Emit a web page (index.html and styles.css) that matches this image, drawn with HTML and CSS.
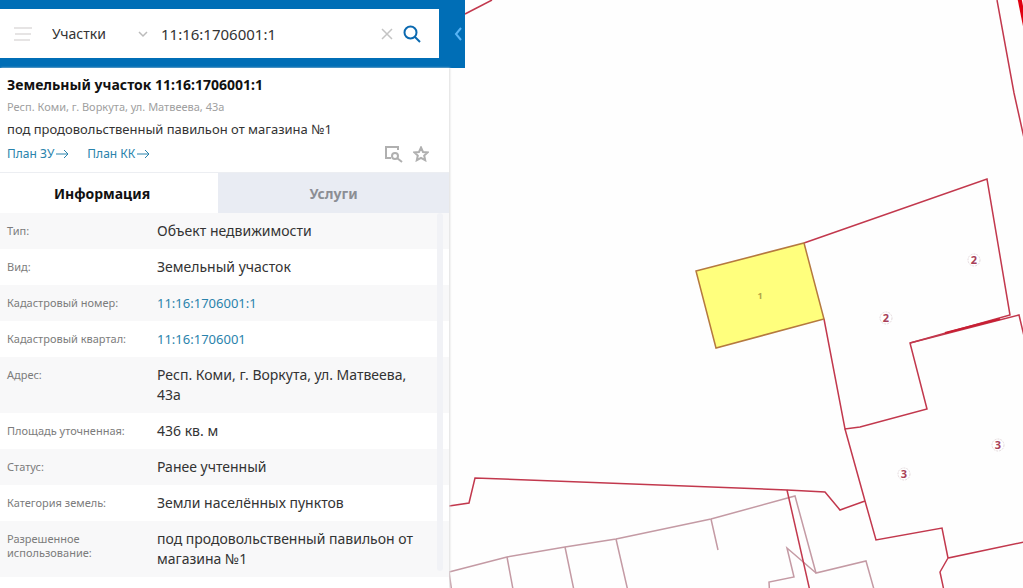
FILE: index.html
```html
<!DOCTYPE html>
<html lang="ru">
<head>
<meta charset="utf-8">
<meta name="viewport" content="width=device-width, initial-scale=1">
<title>Земельный участок 11:16:1706001:1</title>
<link rel="stylesheet" href="styles.css">
</head>
<body>
<div class="app">
  <svg class="map" viewBox="0 0 1023 588" preserveAspectRatio="xMidYMid slice" role="img" aria-label="Карта участков">
    <g class="building" stroke-width="1.5">
      <path d="M449 572 507 557 565 547 616 539 711 519 795 496 816 573 866 561 877 600"/>
      <path d="M449 572 453 600M507 557 515 600M565 547 576 600M616 539 630 600M711 519 718 550"/>
      <path d="M816 573 787 548 794 577 769 582 770 600"/>
    </g>
    <g class="parcel" stroke-width="1.5">
      <path d="M465 14 492 0"/>
      <path d="M997 0 1014 93 1024 138"/>
      <path d="M804 243 987 179 1010 315 910 343 927 409 860 427 845 429 824 319"/>
      <path d="M910 343 1019 315 1025 340"/>
      <path d="M845 429 865 501 876 540 942 528 948 558 1024 542M948 558 940 572 946 600"/>
      <path d="M449 506 469 503 475 478 787 490 825 492 840 510 865 501"/>
      <path d="M787 490 812 600"/>
    </g>
    <path class="overlap" d="M945 333 980 324 1000 319"/>
    <path class="quarter" d="M1019 -4 1025 26"/>
    <path class="selected" stroke-width="1.5" d="M696 271 804 243 824 319 716 348Z"/>
    <text class="label label-selected" x="760" y="299">1</text>
    <g class="halo">
      <circle cx="974" cy="260" r="6"/><circle cx="886" cy="318" r="6"/>
      <circle cx="998" cy="445" r="6"/><circle cx="904" cy="474" r="6"/>
    </g>
    <text class="label" x="974" y="264">2</text>
    <text class="label" x="886" y="322">2</text>
    <text class="label" x="998" y="449">3</text>
    <text class="label" x="904" y="478">3</text>
  </svg>

  <aside class="sidebar">
    <header class="topbar">
      <form class="search">
        <button class="icon-button menu" type="button" aria-label="Меню">
          <svg width="18" height="14" viewBox="0 0 18 14"><path d="M0 1H18M1 7H17M0 13H16"/></svg>
        </button>
        <span class="picker">
          <select class="kind" aria-label="Тип объекта"><option>Участки</option><option>ОКС</option></select>
          <svg class="caret" width="10" height="7" viewBox="0 0 10 7"><path stroke-width="1.5" d="M1 1 5 5 9 1"/></svg>
        </span>
        <input class="query" type="text" value="11:16:1706001:1" aria-label="Поиск">
        <button class="icon-button clear" type="button" aria-label="Очистить">
          <svg width="12" height="12" viewBox="0 0 12 12"><path stroke-width="1.5" d="M1 1 11 11M11 1 1 11"/></svg>
        </button>
        <button class="icon-button find" type="submit" aria-label="Найти">
          <svg width="18" height="18" viewBox="0 0 18 18"><circle cx="7.500" cy="7.500" r="6"/><path d="M12 12 17 17"/></svg>
        </button>
      </form>
      <button class="icon-button collapse" type="button" aria-label="Свернуть">
        <svg width="8" height="14" viewBox="0 0 8 14"><path d="M7 1 2 7 7 13"/></svg>
      </button>
    </header>

    <main class="card">
      <section class="summary">
        <h1 class="title">Земельный участок 11:16:1706001:1</h1>
        <p class="address">Респ. Коми, г. Воркута, ул. Матвеева, 43а</p>
        <p class="purpose">под продовольственный павильон от магазина №1</p>
        <div class="actions">
          <a class="plan" href="#zu">План ЗУ<svg width="13" height="10" viewBox="0 0 13 10"><path d="M0 5H12M8 1 12 5 8 9"/></svg></a>
          <a class="plan" href="#kk">План КК<svg width="13" height="10" viewBox="0 0 13 10"><path d="M0 5H12M8 1 12 5 8 9"/></svg></a>
          <span class="tools">
            <button class="icon-button tool" type="button" aria-label="Показать на карте">
              <svg width="18" height="18" viewBox="0 0 18 18"><path d="M13 5V2H1V13H6"/><circle cx="10" cy="11" r="3"/><path d="M12 13 17 17"/></svg>
            </button>
            <button class="icon-button tool" type="button" aria-label="В избранное">
              <svg width="16" height="16" viewBox="0 0 16 16"><path d="M8 1.500 10 6 14.700 6.400 11.200 9.500 12.200 14.200 8 11.800 3.800 14.200 4.800 9.500 1.300 6.400 6 6Z"/></svg>
            </button>
          </span>
        </div>
      </section>

      <div class="tabs" role="tablist">
        <button class="tab tab-active" type="button" role="tab" aria-selected="true">Информация</button>
        <button class="tab" type="button" role="tab" aria-selected="false">Услуги</button>
      </div>

      <div class="details">
        <table class="facts">
          <tbody>
            <tr><th scope="row">Тип:</th><td>Объект недвижимости</td></tr>
            <tr><th scope="row">Вид:</th><td>Земельный участок</td></tr>
            <tr><th scope="row">Кадастровый номер:</th><td><a href="#number">11:16:1706001:1</a></td></tr>
            <tr><th scope="row">Кадастровый квартал:</th><td><a href="#quarter">11:16:1706001</a></td></tr>
            <tr><th scope="row">Адрес:</th><td>Респ. Коми, г. Воркута, ул. Матвеева, 43а</td></tr>
            <tr><th scope="row">Площадь уточненная:</th><td>436 кв. м</td></tr>
            <tr><th scope="row">Статус:</th><td>Ранее учтенный</td></tr>
            <tr><th scope="row">Категория земель:</th><td>Земли населённых пунктов</td></tr>
            <tr><th scope="row">Разрешенное использование:</th><td>под продовольственный павильон от магазина №1</td></tr>
          </tbody>
        </table>
        <div class="scrollbar"></div>
      </div>
    </main>
  </aside>
</div>
</body>
</html>
```
FILE: styles.css
```css
* { box-sizing: border-box; }

body {
  margin: 0;
  font-family: "Noto Sans", "Open Sans", sans-serif;
  font-size: 14px;
  color: #333;
  background: #fefefe;
}

.app {
  position: relative;
  min-height: 100vh;
  overflow: hidden;
}

/* Map */
.map {
  position: absolute;
  inset: 0;
  width: 100%;
  height: 100%;
}
.map path { fill: none; }
.map .building path { stroke: #c49aa4; }
.map .parcel path { stroke: #c2384d; }
.map .overlap { stroke: #c81e32; stroke-width: 2; }
.map .quarter { stroke: #e00010; stroke-width: 4; }
.map .selected { fill: #ffff7d; stroke: #b5793f; }
.halo { fill: #fff; stroke: #e4dadd; stroke-dasharray: 2 1; }
.label {
  font-size: 11px;
  font-weight: 700;
  text-anchor: middle;
  fill: #a84058;
}
.label-selected { font-size: 9px; fill: #b3a548; }

/* Sidebar */
.sidebar {
  position: relative;
  width: 465px;
  max-width: 100%;
  min-height: 100vh;
  display: flex;
  flex-direction: column;
}

.icon-button {
  display: flex;
  align-items: center;
  justify-content: center;
  padding: 0;
  border: 0;
  background: none;
  cursor: pointer;
}
.icon-button svg, .caret, .plan svg { fill: none; stroke: currentColor; }

.topbar {
  display: flex;
  padding: 9px 0 10px;
  background: #006eb6;
}
.search {
  flex: 1;
  min-width: 0;
  height: 49px;
  display: flex;
  align-items: center;
  padding: 0 18px 0 14px;
  background: #fff;
}
.menu { color: #e6e4e4; stroke-width: 2; }
.picker {
  position: relative;
  width: 97px;
  margin-left: 20px;
  margin-right: 12px;
}
.kind {
  appearance: none;
  width: 100%;
  padding: 0;
  border: 0;
  background: none;
  font: inherit;
  line-height: 20px;
  color: #333;
}
.caret {
  position: absolute;
  right: 1px;
  top: 7px;
  color: #bbb;
}
.query {
  flex: 1;
  min-width: 0;
  padding: 0;
  border: 0;
  font: inherit;
  font-size: 15px;
  line-height: 20px;
  color: #333;
}
.clear { margin-right: 10px; color: #c4c4c4; }
.find { color: #0a69b0; stroke-width: 2; }
.collapse { width: 26px; padding-left: 11px; color: #58b4f5; stroke-width: 2; }

.card {
  flex: 1;
  width: 449px;
  max-width: 100%;
  background: #fff;
  box-shadow: 1px 0 2px #ddd;
}
.summary { padding: 7px 14px 7px 7px; }
.title {
  margin: 0;
  font-size: 14px;
  line-height: 20px;
  font-weight: 700;
  color: #111;
}
.address {
  margin: 2px 0 0;
  font-size: 11px;
  line-height: 20px;
  color: #a0a0a0;
}
.purpose {
  margin: 2px 0 0;
  font-size: 13px;
  line-height: 20px;
}
.actions {
  display: flex;
  align-items: center;
  gap: 18px;
  margin-top: 4px;
}
.plan {
  display: flex;
  align-items: center;
  gap: 2px;
  font-size: 12px;
  line-height: 22px;
  color: #2a83ac;
  text-decoration: none;
}
.tools {
  display: flex;
  align-items: center;
  gap: 10px;
  margin-left: auto;
  padding-right: 6px;
}
.tool { color: #b0b0b0; stroke-width: 2; }

.tabs { display: flex; border-top: 1px solid #eceef2; }
.tab {
  flex: 1;
  height: 40px;
  padding: 0;
  border: 0;
  background: #e9ecf3;
  font: inherit;
  font-weight: 700;
  color: #8c8e94;
}
.tab-active {
  flex: none;
  width: 218px;
  padding-right: 14px;
  background: #fff;
  color: #111;
}

.details { position: relative; }
.facts { width: 100%; border-collapse: collapse; }
.facts tr:nth-child(odd) { background: #f8f8f9; }
.facts th, .facts td { padding: 8px 0; text-align: left; vertical-align: top; }
.facts th {
  width: 157px;
  padding: 11px 30px 0 7px;
  font-size: 11px;
  line-height: 14px;
  font-weight: 400;
  color: #7c7c7c;
}
.facts td { padding-right: 24px; line-height: 20px; }
.facts a { font-size: 13px; color: #2a83ac; text-decoration: none; }
.scrollbar {
  position: absolute;
  top: 0;
  right: 6px;
  bottom: 6px;
  width: 6px;
  border-radius: 3px;
  background: #f1f2f6;
}
```
